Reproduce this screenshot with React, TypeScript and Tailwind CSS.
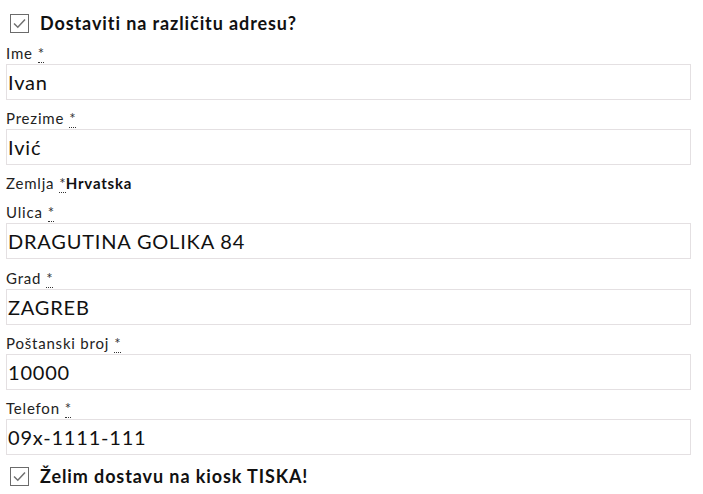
const font = { fontFamily: "Lato, 'Open Sans', sans-serif" };

function CheckBox() {
  return (
    <svg width="19" height="19" viewBox="0 0 19 19" className="shrink-0">
      <rect x="0.5" y="0.5" width="18" height="18" fill="#fff" stroke="#6b6b6b" />
      <path d="M4 9.5 L7.8 13.2 L15 5.5" fill="none" stroke="#707070" strokeWidth="1.5" />
    </svg>
  );
}

function Req() {
  return (
    <abbr className="ml-[5px] text-[#333] no-underline border-b border-dotted border-[#333] leading-none tracking-normal" title="obavezno">
      *
    </abbr>
  );
}

function Field({ label, value, gap = "mt-2" }: { label: string; value: string; gap?: string }) {
  return (
    <div className={gap}>
      <label className="block h-[21px] text-[15px] leading-[21px] text-[#222] tracking-[0.8px]">
        {label}
        <Req />
      </label>
      <div className="h-9 border border-[#e4e0e2] bg-white flex items-center pl-[1px] text-[20px] text-[#111] tracking-[0.8px]">
        {value}
      </div>
    </div>
  );
}

export default function App() {
  return (
    <div className="bg-white w-[703px] h-[494px] pl-[6px] pr-[12px] pt-[12px]" style={font}>
      <div className="flex items-center gap-[11px] pl-[4px] h-[22px]">
        <CheckBox />
        <span className="text-[18px] font-bold text-[#111] tracking-[0.9px]">Dostaviti na različitu adresu?</span>
      </div>
      <Field label="Ime" value="Ivan" gap="mt-[9px]" />
      <Field label="Prezime" value="Ivić" />
      <div className="mt-2 h-[21px] text-[15px] leading-[21px] text-[#222] tracking-[0.8px]">
        Zemlja
        <Req />
        <strong className="font-bold text-[#111]">Hrvatska</strong>
      </div>
      <Field label="Ulica" value="DRAGUTINA GOLIKA 84" />
      <Field label="Grad" value="ZAGREB" gap="mt-[9px]" />
      <Field label="Poštanski broj" value="10000" />
      <Field label="Telefon" value="09x-1111-111" />
      <div className="flex items-center gap-[11px] pl-[4px] h-[22px] mt-[10px]">
        <CheckBox />
        <span className="text-[18px] font-bold text-[#111] tracking-[0.9px]">Želim dostavu na kiosk TISKA!</span>
      </div>
    </div>
  );
}
